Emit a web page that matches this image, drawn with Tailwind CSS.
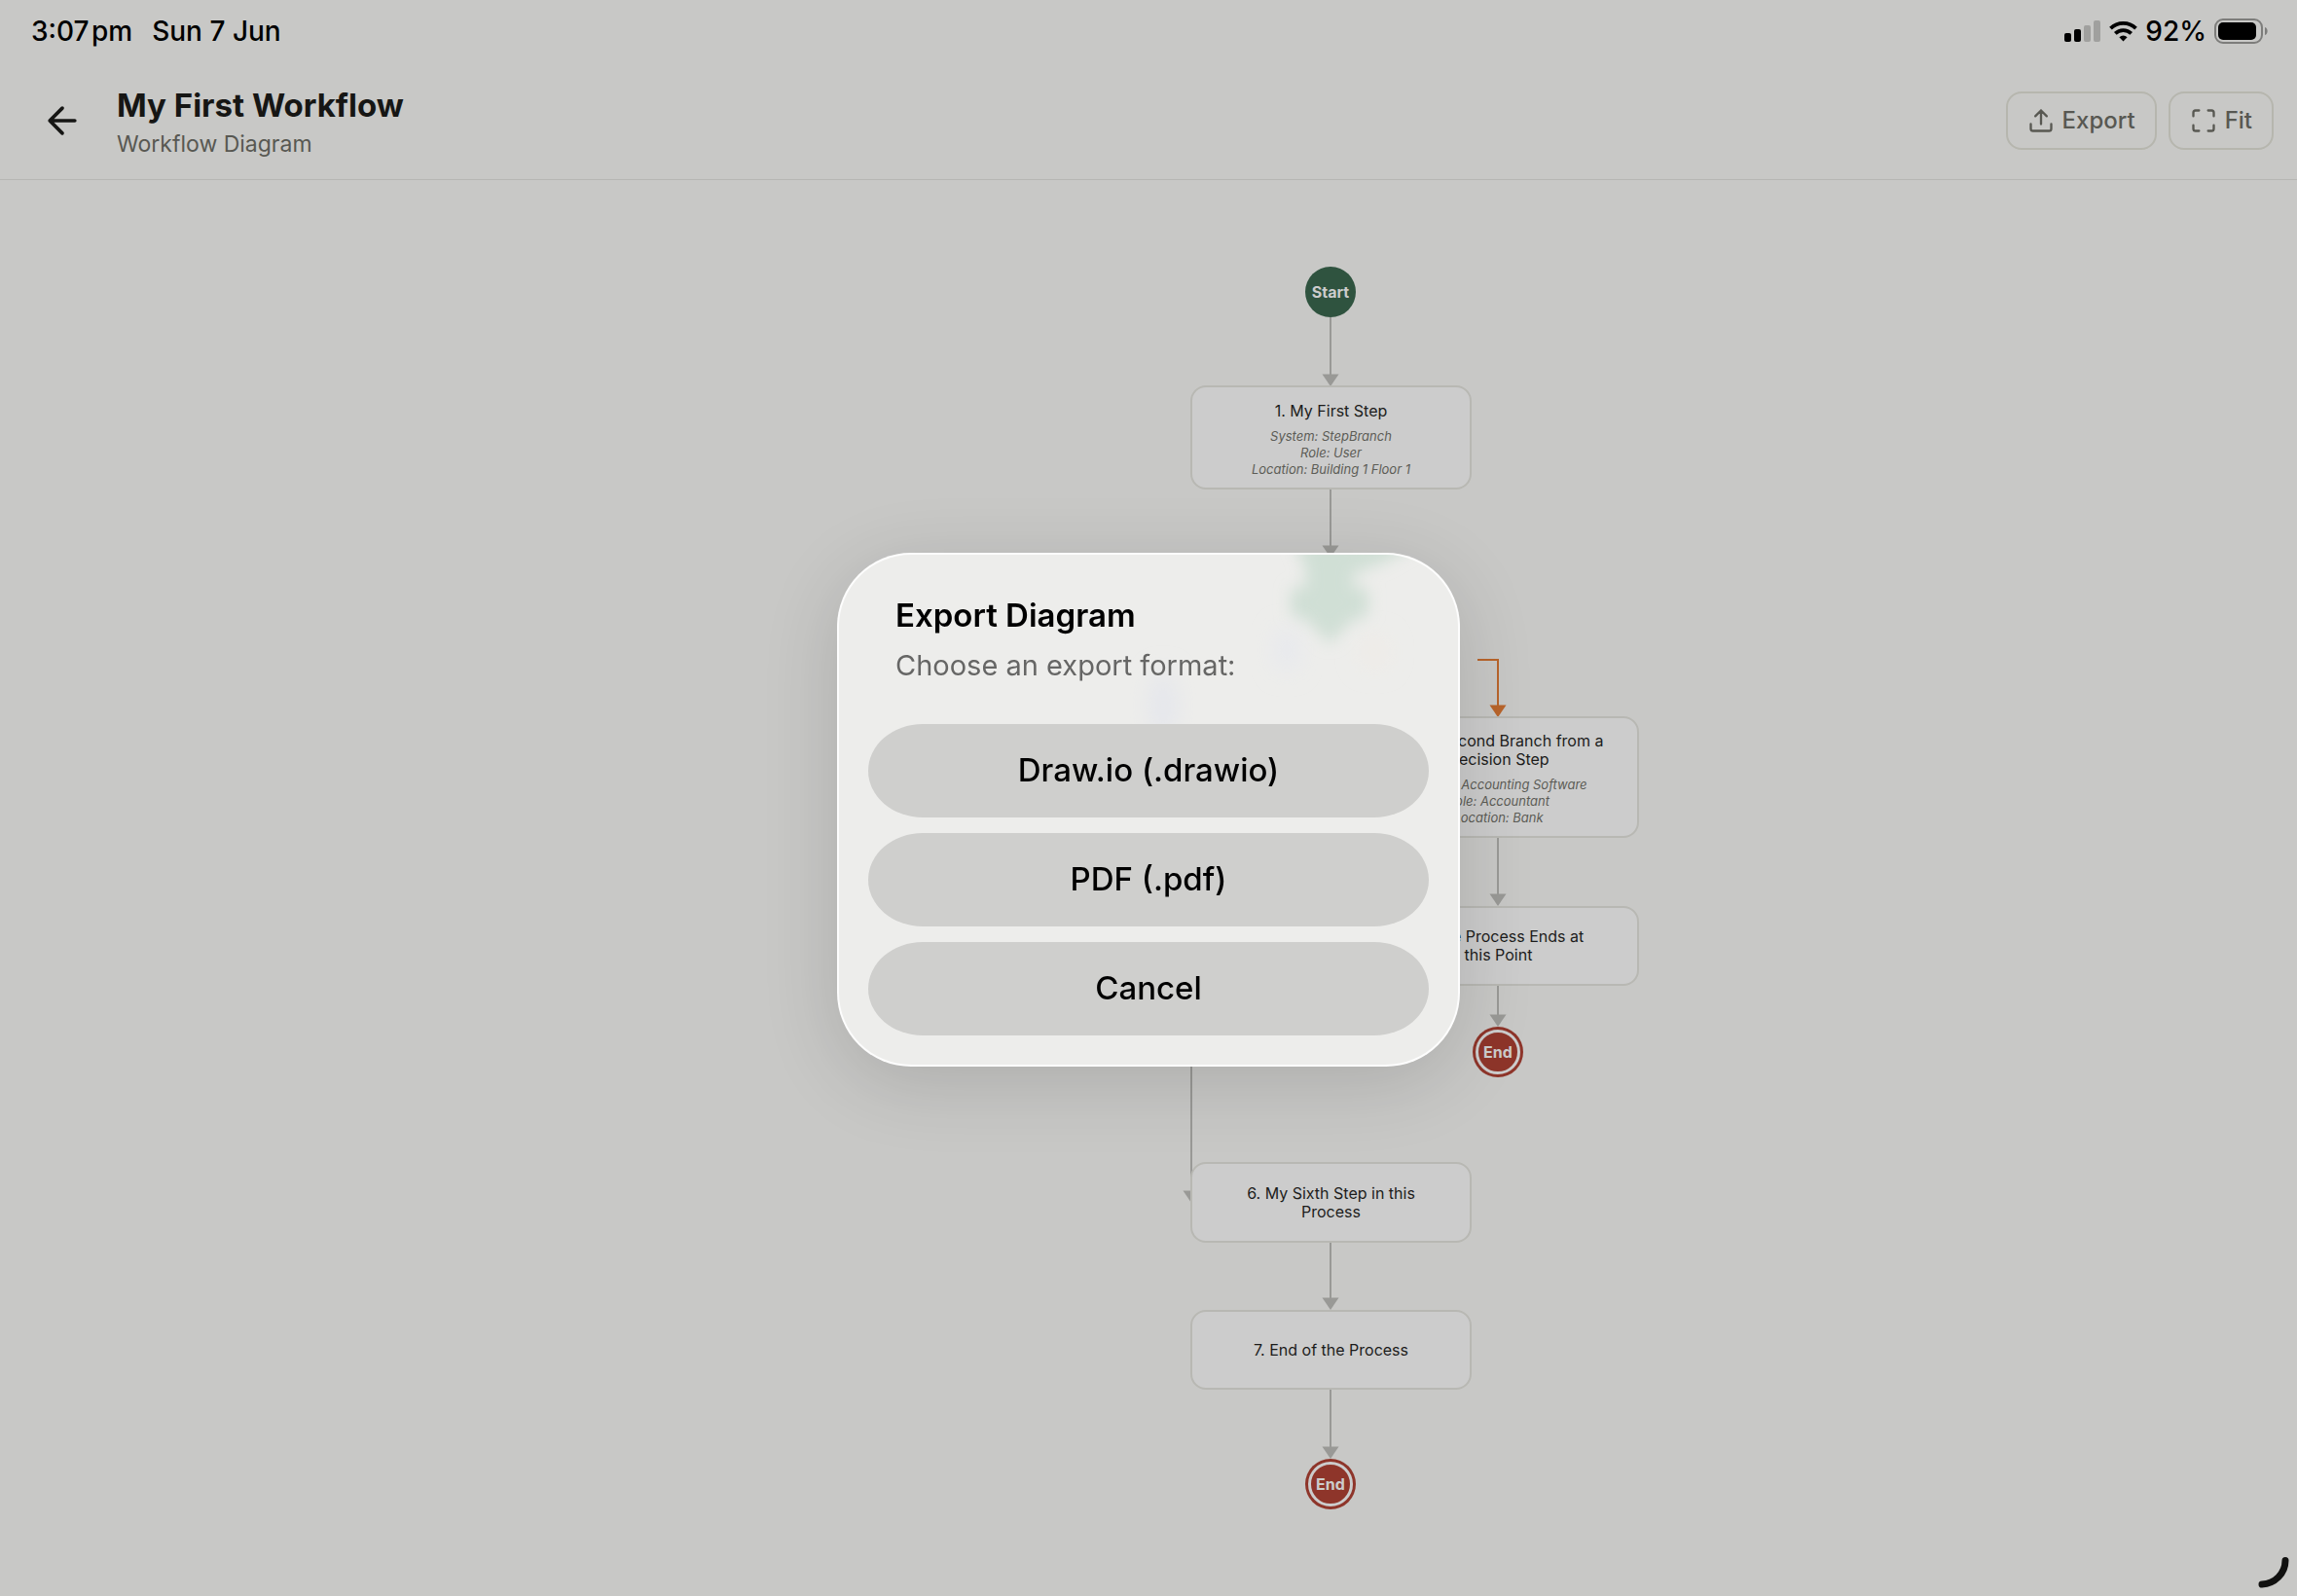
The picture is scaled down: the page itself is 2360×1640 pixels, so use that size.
<!DOCTYPE html>
<html lang="en">
<head>
  <meta charset="UTF-8">
  <meta name="viewport" content="width=device-width, initial-scale=1">
  <title>My First Workflow</title>
  <script src="https://cdn.jsdelivr.net/npm/@tailwindcss/browser@4"></script>
</head>
<body class="min-h-screen flex flex-col overflow-hidden bg-[#c8c8c6] font-['Inter',sans-serif] text-black">

  <!-- Status bar -->
  <div class="h-16 shrink-0 flex items-center justify-between pl-8 pr-7 text-[28px] font-medium leading-8">
    <div class="flex gap-5">
      <span>3:07&#8202;pm</span>
      <span>Sun 7 Jun</span>
    </div>
    <div class="flex items-center gap-2">
      <svg class="w-[38px] h-6" viewBox="0 0 38 24" aria-hidden="true">
        <rect x="0" y="14" width="7" height="9" rx="2"/>
        <rect x="10" y="10" width="7" height="13" rx="2"/>
        <rect x="20" y="6" width="7" height="17" rx="2" fill="#a0a09e"/>
        <rect x="30" y="1" width="7" height="22" rx="2" fill="#a0a09e"/>
      </svg>
      <svg class="w-[29px] h-6" viewBox="0 0 29 24" fill="none" stroke="#000" stroke-width="3.8" aria-hidden="true">
        <path d="M1.5 9.2a18.6 18.6 0 0 1 26 0"/>
        <path d="M6.3 14.4a11.8 11.8 0 0 1 16.4 0"/>
        <path d="M14.5 22.4l-4.1-4.2a6 6 0 0 1 8.2 0z" fill="#000" stroke="none"/>
      </svg>
      <span>92%</span>
      <svg class="w-[57px] h-7" viewBox="0 0 57 28" aria-hidden="true">
        <rect x="1" y="2" width="48" height="24" rx="8" fill="none" stroke="#7d7d7b" stroke-width="2"/>
        <rect x="4" y="5" width="39" height="18" rx="5"/>
        <path d="M52 10c3.5 1 3.5 7 0 8z" fill="#7d7d7b"/>
      </svg>
    </div>
  </div>

  <!-- Header -->
  <header class="h-[121px] shrink-0 flex items-center gap-4 px-6 border-b border-[#b6b6b3]">
    <button type="button" aria-label="Back" class="w-20 h-20 flex items-center justify-center text-[#161614]">
      <svg class="w-11 h-11" viewBox="0 0 24 24" fill="none" stroke="currentColor" stroke-width="2" stroke-linecap="round" stroke-linejoin="round"><path d="M19 12H5M12 19l-7-7 7-7"/></svg>
    </button>
    <div class="flex-1 pt-2">
      <h1 class="text-[33px] leading-10 font-bold text-[#161614]">My First Workflow</h1>
      <p class="text-[23px] leading-10 text-[#585852]">Workflow Diagram</p>
    </div>
    <div class="flex gap-3 text-2xl font-medium text-[#585852]">
      <button type="button" class="h-15 flex items-center gap-2 px-5 border-2 border-[#b6b6ae] rounded-2xl">
        <svg class="w-7 h-7" viewBox="0 0 24 24" fill="none" stroke="currentColor" stroke-width="2" stroke-linecap="round" stroke-linejoin="round"><path d="M21 15v4a2 2 0 0 1-2 2H5a2 2 0 0 1-2-2v-4M17 8l-5-5-5 5M12 3v12"/></svg>
        Export
      </button>
      <button type="button" class="h-15 flex items-center gap-2 px-5 border-2 border-[#b6b6ae] rounded-2xl">
        <svg class="w-7 h-7" viewBox="0 0 24 24" fill="none" stroke="currentColor" stroke-width="2" stroke-linecap="round" stroke-linejoin="round"><path d="M8 3H5a2 2 0 0 0-2 2v3M21 8V5a2 2 0 0 0-2-2h-3M16 21h3a2 2 0 0 0 2-2v-3M3 16v3a2 2 0 0 0 2 2h3"/></svg>
        Fit
      </button>
    </div>
  </header>

  <!-- Diagram canvas, origin is the corner under the header -->
  <main class="relative flex-1 text-base leading-[19px] text-center text-[#1c1c1b]">
    <svg class="absolute left-0 top-0 w-[1800px] h-[1440px]" viewBox="0 0 1800 1440" fill="none" stroke="#999996" stroke-width="2" aria-hidden="true">
      <defs>
        <path id="head" d="M-8.5 -12.5H8.5L0 0z" stroke="none"/>
      </defs>
      <path d="M1367 141V202M1367 318V380M1539 676V736M1539 828V860M1224 700V1038M1367 1091V1150M1367 1243V1302"/>
      <g fill="#999996">
        <use href="#head" x="1367" y="212"/>
        <use href="#head" x="1367" y="388"/>
        <use href="#head" x="1539" y="746"/>
        <use href="#head" x="1539" y="870"/>
        <use href="#head" x="1224" y="1051"/>
        <use href="#head" x="1367" y="1161"/>
        <use href="#head" x="1367" y="1314"/>
      </g>
      <path d="M1518 493H1539V542" stroke="#b8642b"/>
      <use href="#head" x="1539" y="552" fill="#b8642b"/>
    </svg>

    <div class="absolute left-[1341px] top-[89px] w-13 h-13 rounded-full bg-[#2f533f] flex items-center justify-center text-base font-bold text-[#cccccc]">Start</div>

    <div class="absolute left-[1223px] top-[211px] w-[289px] h-[107px] pt-1 rounded-2xl border-2 border-[#b8b8b3] bg-[#cccccc] flex flex-col items-center justify-center gap-2">
      <h2>1. My First Step</h2>
      <p class="text-[13px] leading-[17px] italic text-[#5c5c56]">System: StepBranch<br>Role: User<br>Location: Building 1 Floor 1</p>
    </div>

    <div class="absolute left-[1395px] top-[551px] w-[289px] h-[125px] pt-1 rounded-2xl border-2 border-[#b8b8b3] bg-[#cccccc] flex flex-col items-center justify-center gap-2">
      <h2>4. My Second Branch from a<br>Decision Step</h2>
      <p class="text-[13px] leading-[17px] italic text-[#5c5c56]">System: Accounting Software<br>Role: Accountant<br>Location: Bank</p>
    </div>

    <div class="absolute left-[1395px] top-[746px] w-[289px] h-[82px] rounded-2xl border-2 border-[#b8b8b3] bg-[#cccccc] flex items-center justify-center">
      <h2>5. One Process Ends at<br>this Point</h2>
    </div>

    <div class="absolute left-[1513px] top-[870px] w-13 h-13 p-[3px] rounded-full bg-[#8e352a]">
      <div class="w-full h-full rounded-full border-3 border-[#cccccc] flex items-center justify-center text-base font-bold text-[#cccccc]">End</div>
    </div>

    <div class="absolute left-[1223px] top-[1009px] w-[289px] h-[83px] rounded-2xl border-2 border-[#b8b8b3] bg-[#cccccc] flex items-center justify-center">
      <h2>6. My Sixth Step in this<br>Process</h2>
    </div>

    <div class="absolute left-[1223px] top-[1161px] w-[289px] h-[82px] rounded-2xl border-2 border-[#b8b8b3] bg-[#cccccc] flex items-center justify-center">
      <h2>7. End of the Process</h2>
    </div>

    <div class="absolute left-[1341px] top-[1314px] w-13 h-13 p-[3px] rounded-full bg-[#8e352a]">
      <div class="w-full h-full rounded-full border-3 border-[#cccccc] flex items-center justify-center text-base font-bold text-[#cccccc]">End</div>
    </div>

    <!-- Window corner handle -->
    <svg class="absolute right-2 bottom-2 w-8 h-8" viewBox="0 0 32 32" fill="none" stroke="#111110" stroke-width="7" stroke-linecap="round" aria-hidden="true"><path d="M4 28C17 27.500 28 17 28 3.500"/></svg>
  </main>

  <!-- Export dialog -->
  <div class="fixed inset-0 pt-6 flex items-center justify-center">
    <div role="dialog" aria-labelledby="dialogTitle" class="relative w-[640px] p-[30px] overflow-hidden rounded-[76px] border-2 border-white/90 bg-[#ededeb] shadow-[0_16px_80px_rgba(0,0,0,0.14)]">
      <!-- Diagram colours showing through the glass -->
      <svg class="absolute inset-0 w-full h-full" viewBox="0 0 636 524" aria-hidden="true">
        <defs>
          <filter id="soft" x="-50%" y="-50%" width="200%" height="200%"><feGaussianBlur stdDeviation="8"/></filter>
          <filter id="faint" x="-100%" y="-100%" width="300%" height="300%"><feGaussianBlur stdDeviation="12"/></filter>
        </defs>
        <g filter="url(#soft)">
          <path d="M468 -14H600L560 8L528 20V34H544V62L526 68L504 92L482 68L464 62V34H480V16z" fill="#d0dfd5"/>
        </g>
        <ellipse cx="333" cy="155" rx="12" ry="36" fill="#e3e5ec" filter="url(#faint)"/>
        <ellipse cx="460" cy="98" rx="12" ry="22" fill="#e6e8ee" filter="url(#faint)"/>
        <ellipse cx="550" cy="100" rx="14" ry="16" fill="#efebe6" filter="url(#faint)"/>
      </svg>

      <div class="relative flex flex-col gap-4">
        <div class="px-7 pt-2 pb-5">
          <h2 id="dialogTitle" class="text-[33px] leading-12 font-semibold">Export Diagram</h2>
          <p class="mt-1 text-[29px] leading-12 text-[#666665]">Choose an export format:</p>
        </div>
        <button type="button" class="h-24 rounded-[56px/48px] bg-[#cfcfcd] text-[33px] font-medium">Draw.io (.drawio)</button>
        <button type="button" class="h-24 rounded-[56px/48px] bg-[#cfcfcd] text-[33px] font-medium">PDF (.pdf)</button>
        <button type="button" class="h-24 rounded-[56px/48px] bg-[#cfcfcd] text-[33px] font-medium">Cancel</button>
      </div>
    </div>
  </div>

</body>
</html>
